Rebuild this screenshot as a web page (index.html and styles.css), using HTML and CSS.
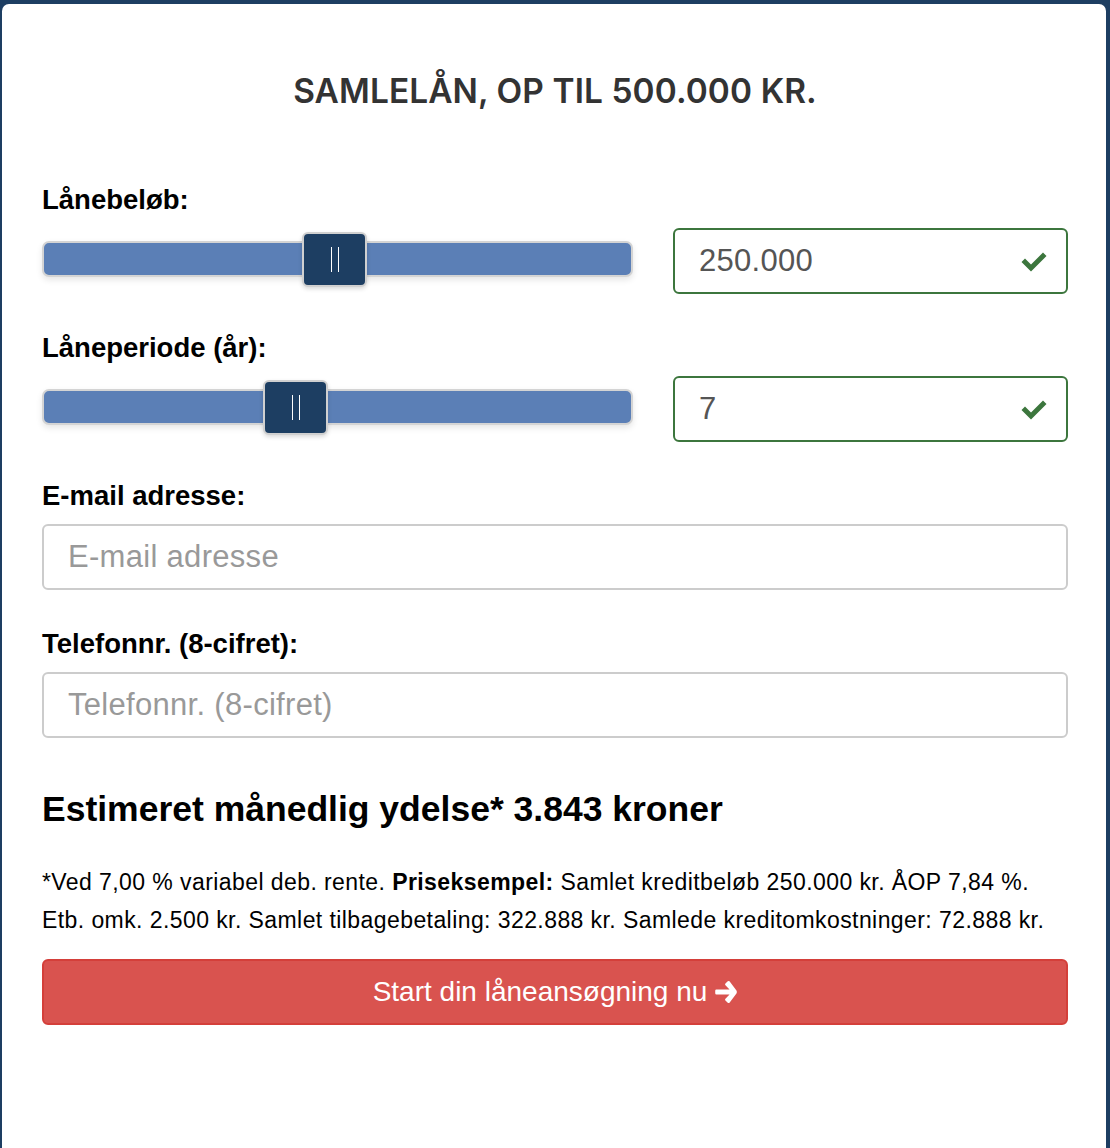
FILE: index.html
```html
<!DOCTYPE html>
<html lang="da">
<head>
<meta charset="utf-8">
<title>Samlelån</title>
<link rel="stylesheet" href="styles.css">
</head>
<body>
<div class="card">
  <h1 class="title">SAMLELÅN, OP TIL 500.000 KR.</h1>

  <label class="label">Lånebeløb:</label>
  <div class="row">
    <div class="slider">
      <div class="track"></div>
      <div class="handle" style="left: 260px"><span class="grip"></span></div>
    </div>
    <div class="valbox">
      <span class="val">250.000</span>
      <svg class="check" viewBox="0 0 28 22" width="28" height="22"><path d="M1.5 12 L5 8.5 L11 14.5 L23 2.5 L26.5 6 L11 21.5 Z" fill="#3c763d"/></svg>
    </div>
  </div>

  <label class="label">Låneperiode (år):</label>
  <div class="row">
    <div class="slider">
      <div class="track"></div>
      <div class="handle" style="left: 221px"><span class="grip"></span></div>
    </div>
    <div class="valbox">
      <span class="val">7</span>
      <svg class="check" viewBox="0 0 28 22" width="28" height="22"><path d="M1.5 12 L5 8.5 L11 14.5 L23 2.5 L26.5 6 L11 21.5 Z" fill="#3c763d"/></svg>
    </div>
  </div>

  <label class="label">E-mail adresse:</label>
  <input class="field" type="text" placeholder="E-mail adresse">

  <label class="label">Telefonnr. (8-cifret):</label>
  <input class="field" type="text" placeholder="Telefonnr. (8-cifret)">

  <h2 class="estimate">Estimeret månedlig ydelse* 3.843 kroner</h2>

  <p class="fine">*Ved 7,00 % variabel deb. rente. <b>Priseksempel:</b> Samlet kreditbeløb 250.000 kr. ÅOP 7,84 %. Etb. omk. 2.500 kr. Samlet tilbagebetaling: 322.888 kr. Samlede kreditomkostninger: 72.888 kr.</p>

  <button class="cta" type="button">Start din låneansøgning nu <svg class="arrow" viewBox="0 0 20 20" width="22" height="22"><path d="M9.5 2.2 L11.6 0.3 Q12.4 -0.3 13.2 0.3 L19.5 8.6 Q20.2 10 19.5 11.4 L13.2 19.7 Q12.4 20.3 11.6 19.7 L9.5 17.8 Q8.8 17 9.5 16.1 L13.2 12.3 L1.3 12.3 Q0.2 12.3 0.2 11.2 L0.2 8.8 Q0.2 7.7 1.3 7.7 L13.2 7.7 L9.5 3.9 Q8.8 3 9.5 2.2 Z" fill="#fff"/></svg></button>
</div>
</body>
</html>
```

FILE: styles.css
```css
html, body {
  margin: 0;
  padding: 0;
}
body {
  background: #1d3e62;
  padding: 4px 4px 0 2px;
  width: 1110px;
  height: 1148px;
  box-sizing: border-box;
  overflow: hidden;
  font-family: "Liberation Sans", Arial, sans-serif;
  color: #000;
}
.card {
  background: #fff;
  border-radius: 7px;
  height: 1150px;
  padding: 0 38px 0 40px;
  display: flex;
  flex-direction: column;
}
.title {
  font-family: Inter, "Open Sans", sans-serif;
  font-weight: 600;
  font-size: 33.4px;
  color: #333;
  text-align: center;
  margin: 65px 0 0 0;
  line-height: 44px;
  letter-spacing: 0.1px;
}
.label {
  display: block;
  font-weight: 700;
  font-size: 27.5px;
  line-height: 30px;
  margin: 0;
}
.title + .label { margin-top: 72px; }
.row {
  display: grid;
  grid-template-columns: 591px 1fr;
  column-gap: 40px;
  margin-top: 13px;
  margin-bottom: 39px;
}
.slider {
  position: relative;
  height: 66px;
}
.track {
  position: absolute;
  left: 0;
  right: 0;
  top: 13px;
  height: 32px;
  background: #5b7fb6;
  border: 2px solid #d4d4d4;
  border-radius: 7px;
  box-shadow: 0 3px 6px rgba(0,0,0,0.1);
}
.handle {
  position: absolute;
  top: 4px;
  width: 61px;
  height: 51px;
  background: #1d3e62;
  border: 2px solid #d0d0d0;
  border-radius: 6px;
  box-shadow: 0 2px 4px rgba(0,0,0,0.15);
  display: flex;
  align-items: center;
  justify-content: center;
}
.grip {
  height: 25px;
  width: 8px;
  border-left: 1.5px solid #fff;
  border-right: 1.5px solid #fff;
  box-sizing: border-box;
}
.valbox {
  height: 66px;
  box-sizing: border-box;
  border: 2px solid #3c763d;
  border-radius: 6px;
  display: flex;
  align-items: center;
  justify-content: space-between;
  padding: 0 18px 0 24px;
}
.val {
  font-size: 31px;
  letter-spacing: 0.3px;
  color: #555;
}
.check { display: block; }
.field {
  display: block;
  box-sizing: border-box;
  width: 100%;
  height: 66px;
  margin: 13px 0 39px 0;
  border: 2px solid #ccc;
  border-radius: 6px;
  padding: 0 24px;
  font-family: "Liberation Sans", Arial, sans-serif;
  font-size: 31px;
  letter-spacing: 0.3px;
  color: #555;
  outline: none;
  background: #fff;
}
.field::placeholder { color: #999; }
.estimate {
  font-size: 35.5px;
  font-weight: 700;
  margin: 10px 0 0 0;
  line-height: 44px;
}
.fine {
  font-size: 23px;
  letter-spacing: 0.42px;
  line-height: 38px;
  margin: 32px 0 0 0;
}
.cta {
  margin-top: 20px;
  height: 66px;
  width: 100%;
  background: #d9534f;
  border: 2px solid #d43f3a;
  border-radius: 6px;
  color: #fff;
  font-family: "Liberation Sans", Arial, sans-serif;
  font-size: 28px;
  display: flex;
  align-items: center;
  justify-content: center;
  gap: 8px;
  padding: 0;
}
.arrow { display: block; }
```
